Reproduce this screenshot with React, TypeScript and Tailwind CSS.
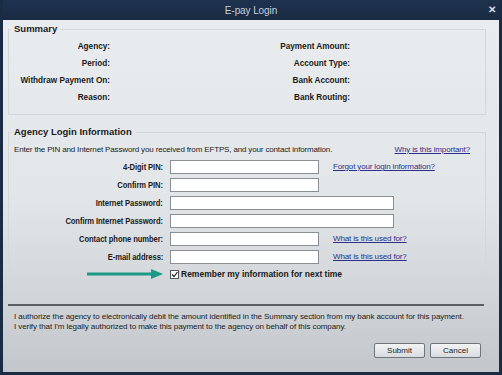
/* E-pay Login dialog */
const font = { fontFamily: '"Liberation Sans", Arial, sans-serif' };

function Row({ label, wide, link }: { label: string; wide?: boolean; link?: string }) {
  return (
    <div className="flex items-center h-[18px]">
      <div className="w-[161px] flex justify-end pr-[7px]">
        <span className="inline-block whitespace-nowrap origin-right scale-x-[0.8] text-[9.5px] leading-[12px] tracking-[-0.1px] font-bold text-[#1a1a1a]">{label}</span>
      </div>
      <div className={`h-[14px] bg-white border border-[#8a8f95] ${wide ? 'w-[224px]' : 'w-[149px]'}`} />
      {link && <a className="ml-[14px] text-[8px] leading-[12px] tracking-[-0.15px] text-[#2b2f8a] underline">{link}</a>}
    </div>
  );
}

export default function App() {
  const left = ['Agency:', 'Period:', 'Withdraw Payment On:', 'Reason:'];
  const right = ['Payment Amount:', 'Account Type:', 'Bank Account:', 'Bank Routing:'];
  return (
    <div className="w-[502px] h-[375px] bg-[#1a2b44] flex flex-col px-[3px] pb-[3px]" style={font}>
      {/* title bar */}
      <div className="h-[20px] shrink-0 flex items-center justify-center relative bg-gradient-to-b from-[#1e324f] to-[#192a43]">
        <span className="text-[10px] tracking-[-0.1px] text-[#c9d1dd]">E-pay Login</span>
        <span className="absolute right-[3px] top-[4px] text-[10px] leading-[12px] font-bold text-[#d8dee6]">✕</span>
      </div>

      <div className="flex-1 flex flex-col bg-gradient-to-b from-[#e9ecef] via-[#e3e6e9] to-[#c3c7cb] px-[5px]">
        {/* Summary */}
        <fieldset className="mt-[2px] border border-[#d3d7db] pb-[10px] mr-[8px]">
          <legend className="ml-[2px] px-[3px] text-[9.5px] leading-[14px] font-bold text-[#1a1a1a]">Summary</legend>
          <div className="grid grid-cols-[101px_140px_100px_1fr] gap-y-[5px] mt-[5px] text-[8.2px] leading-[12px] font-bold text-[#1a1a1a]">
            {left.map((l, i) => (
              <div key={l} className="contents">
                <div className="text-right">{l}</div>
                <div />
                <div className="text-right">{right[i]}</div>
                <div />
              </div>
            ))}
          </div>
        </fieldset>

        {/* Agency login */}
        <fieldset className="mt-[10px] border border-[#d3d7db] mr-[8px] pb-[10px]">
          <legend className="ml-[2px] px-[3px] text-[9.5px] leading-[14px] font-bold text-[#1a1a1a]">Agency Login Information</legend>
          <div className="flex items-center justify-between h-[12px] pl-[5px] pr-[15px] mt-[5px] mb-[2px] text-[8px] tracking-[-0.15px]">
            <span className="text-[#1a1a1a]">Enter the PIN and Internet Password you received from EFTPS, and your contact information.</span>
            <a className="text-[#2b2f8a] underline">Why is this important?</a>
          </div>
          <Row label="4-Digit PIN:" link="Forgot your login information?" />
          <Row label="Confirm PIN:" />
          <Row label="Internet Password:" wide />
          <Row label="Confirm Internet Password:" wide />
          <Row label="Contact phone number:" link="What is this used for?" />
          <Row label="E-mail address:" link="What is this used for?" />
          <div className="flex items-center h-[16px]">
            <div className="w-[161px] flex justify-end pr-[7px]">
              <svg width="76" height="10" viewBox="0 0 76 10">
                <line x1="0" y1="5" x2="66" y2="5" stroke="#1b9a86" strokeWidth="3" />
                <polygon points="64,0 76,5 64,10" fill="#1b9a86" />
              </svg>
            </div>
            <div className="w-[9px] h-[9px] border border-[#555] bg-white flex items-center justify-center">
              <svg width="7" height="7" viewBox="0 0 7 7"><path d="M1 3.5 L3 5.5 L6.5 1" stroke="#222" strokeWidth="1.2" fill="none" /></svg>
            </div>
            <span className="ml-[2px] text-[8.5px] leading-[12px] font-bold text-[#1a1a1a]">Remember my information for next time</span>
          </div>
        </fieldset>

        <div className="mt-[11px] mr-[10px] h-[2px] bg-[#5b5f63]" />
        <div className="pl-[6px] mt-[6px] text-[8px] leading-[10px] tracking-[-0.08px] text-[#1a1a1a]">
          <div>I authorize the agency to electronically debit the amount identified in the Summary section from my bank account for this payment.</div>
          <div>I verify that I'm legally authorized to make this payment to the agency on behalf of this company.</div>
        </div>
        <div className="flex justify-end gap-[5px] mr-[13px] mt-[11px]">
          <button className="w-[51px] h-[15px] border border-[#70757a] rounded-[2px] bg-gradient-to-b from-[#f2f3f4] to-[#d9dcdf] text-[8px] leading-[12px] text-[#1a1a1a]">Submit</button>
          <button className="w-[51px] h-[15px] border border-[#70757a] rounded-[2px] bg-gradient-to-b from-[#f2f3f4] to-[#d9dcdf] text-[8px] leading-[12px] text-[#1a1a1a]">Cancel</button>
        </div>
      </div>
    </div>
  );
}
